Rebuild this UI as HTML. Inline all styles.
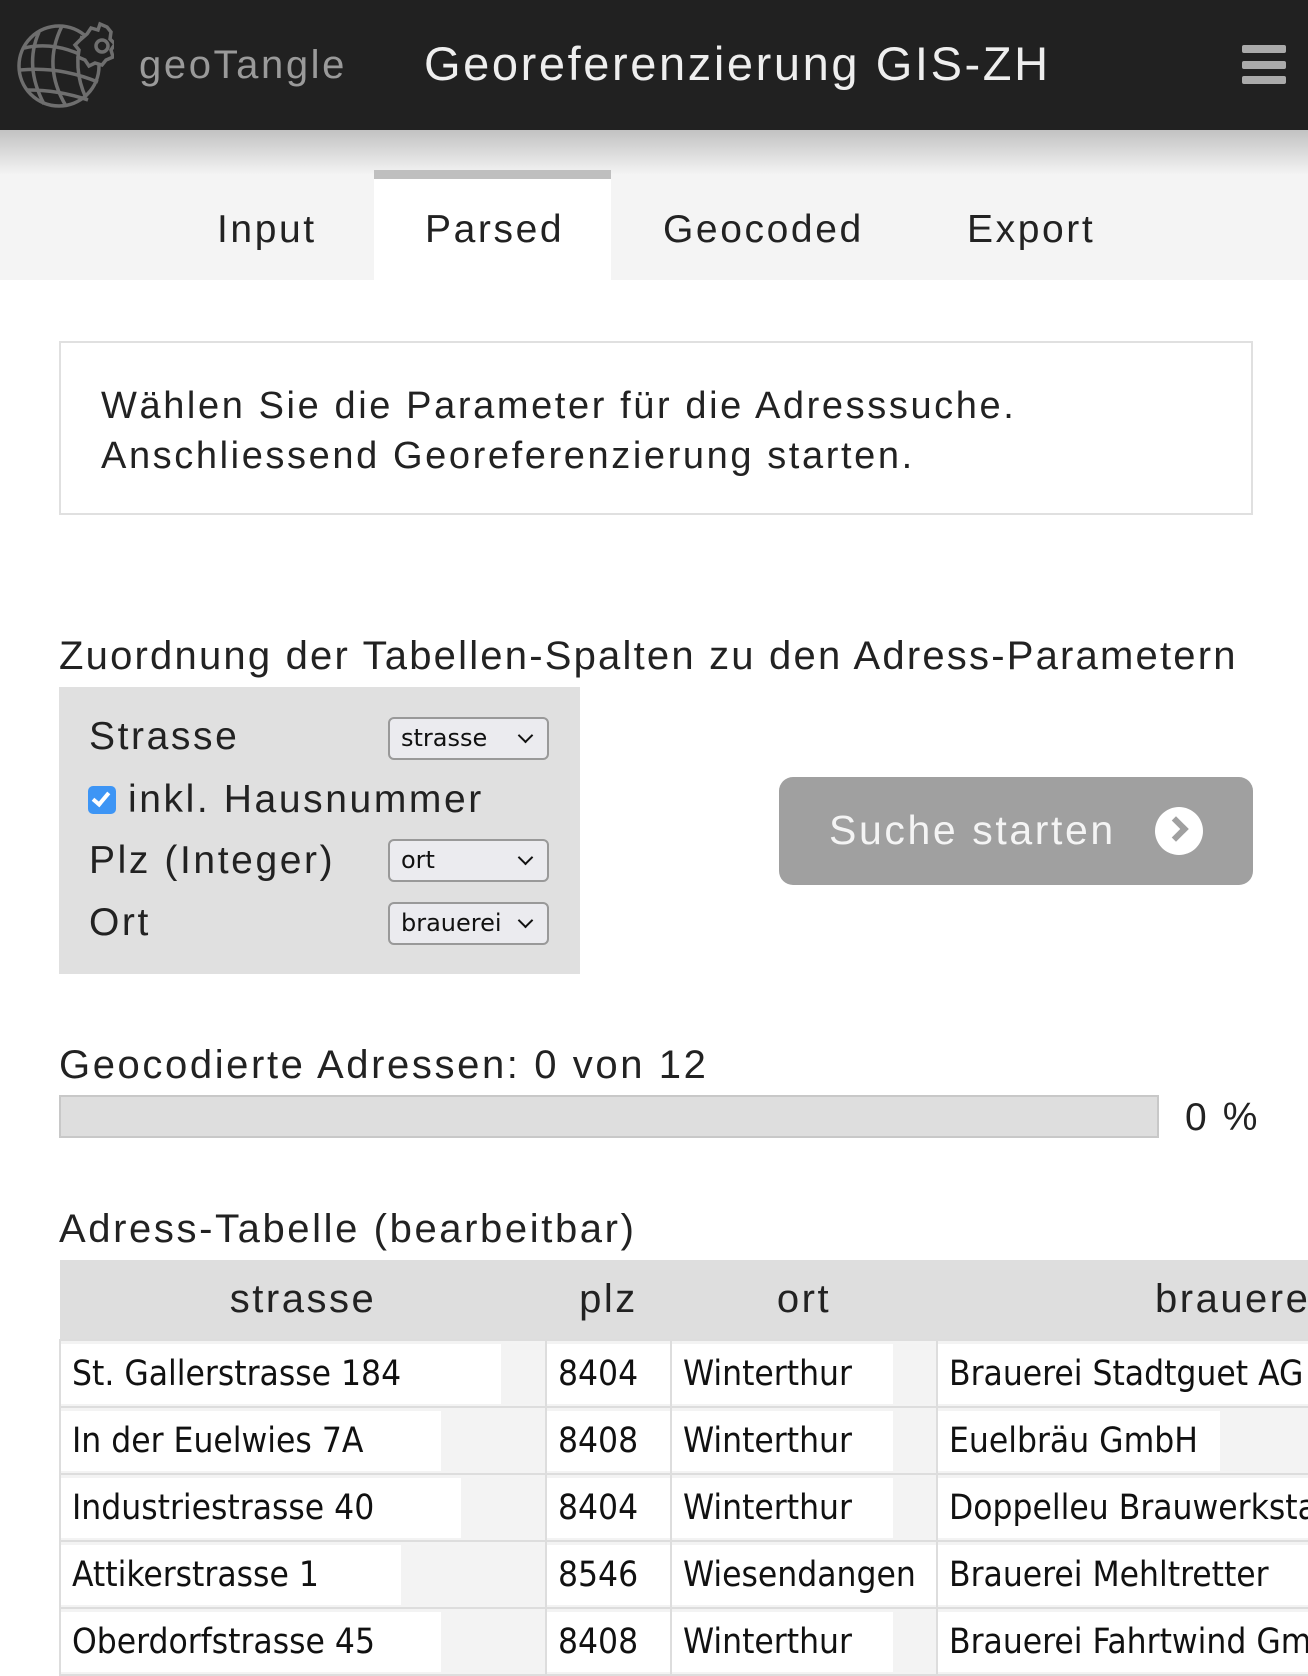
<!DOCTYPE html>
<html><head><meta charset="utf-8">
<style>
*{box-sizing:border-box;margin:0;padding:0}
body{width:1308px;height:1676px;overflow:hidden;background:#fff;font-family:"Liberation Sans",sans-serif;color:#222;position:relative}
.hdr{position:absolute;left:0;top:0;width:1308px;height:130px;background:#212121}
.abs{position:absolute;white-space:nowrap}
.ls{letter-spacing:2.6px}
.tabs{position:absolute;left:0;top:130px;width:1308px;height:150px;background:linear-gradient(#c2c2c2 0px,#f4f4f4 45px,#f4f4f4 100%)}
.tab{position:absolute;top:78px;font-size:39px;color:#222;letter-spacing:2.6px}
.sel{position:absolute;left:388px;width:161px;height:43px;border:2px solid #999;border-radius:6px;background:#ebebef;font-family:"DejaVu Sans",sans-serif;font-size:24px;padding:5px 0 0 11px;color:#111}
.sel:after{content:"";position:absolute;right:16px;top:11px;width:9px;height:9px;border-right:2.5px solid #111;border-bottom:2.5px solid #111;transform:rotate(45deg)}
table{position:absolute;left:59px;top:1260px;border-collapse:collapse;width:1400px}
th{height:80px;background:#dedede;font-weight:normal;font-size:40px;color:#222;letter-spacing:2.5px}
td{height:67px;border:2px solid #ddd;background:#f3f3f3;padding:2px 0;font-family:"DejaVu Sans Condensed","DejaVu Sans",sans-serif;font-size:35px;color:#111}
td span{display:block;background:#fff;height:60px;line-height:60px;padding-left:11px;white-space:nowrap;overflow:hidden}
</style></head><body>
<div class="hdr">
<svg class="abs" style="left:14px;top:18px" width="100" height="92" viewBox="0 0 100 92" fill="none" stroke="#6e6e6e" stroke-width="3.5">
<circle cx="45" cy="48" r="40"/>
<path d="M25 14 Q10 48 30 86 M48 8 Q28 48 52 88 M68 18 Q58 50 72 80"/>
<path d="M10 30 Q45 22 80 44 M6 52 Q45 48 84 64 M14 72 Q45 72 74 82"/>
<path fill="#212121" d="M73 16 l4 -6 l7 2 l2 -6 l7 3 l4 5 l-1 7 l5 5 l-4 6 l2 7 l-7 3 l-4 5 l-7 -2 l-6 3 l-4 -6 l-7 -3 l1 -7 l-4 -5 l5 -5 z"/>
<circle cx="88" cy="28" r="6"/>
</svg>
<div class="abs ls" style="left:139px;top:43px;font-size:40px;color:#9a9a9a">geoTangle</div>
<div class="abs ls" style="left:424px;top:36px;font-size:47px;color:#eee">Georeferenzierung GIS-ZH</div>
<div class="abs" style="left:1242px;top:45px;width:44px;height:8px;background:#aaa;border-radius:2px"></div>
<div class="abs" style="left:1242px;top:61px;width:44px;height:8px;background:#aaa;border-radius:2px"></div>
<div class="abs" style="left:1242px;top:76px;width:44px;height:8px;background:#aaa;border-radius:2px"></div>
</div>
<div class="tabs">
<div class="abs" style="left:374px;top:40px;width:237px;height:110px;background:#fff;border-top:9px solid #bfbfbf"></div>
<div class="tab" style="left:217px">Input</div>
<div class="tab" style="left:425px">Parsed</div>
<div class="tab" style="left:663px">Geocoded</div>
<div class="tab" style="left:967px">Export</div>
</div>
<div class="abs" style="left:59px;top:341px;width:1194px;height:174px;border:2px solid #e0e0e0"></div>
<div class="abs ls" style="left:101px;top:381px;font-size:38px;line-height:50px">Wählen Sie die Parameter für die Adresssuche.<br>Anschliessend Georeferenzierung starten.</div>
<div class="abs" style="left:59px;top:634px;font-size:40px;letter-spacing:2.2px">Zuordnung der Tabellen-Spalten zu den Adress-Parametern</div>
<div class="abs" style="left:59px;top:687px;width:521px;height:287px;background:#e0e0e0"></div>
<div class="abs ls" style="left:89px;top:715px;font-size:39px">Strasse</div>
<div class="sel" style="top:717px">strasse</div>
<div class="abs" style="left:88px;top:786px;width:28px;height:28px;background:#3d95f5;border-radius:5px"></div>
<div class="abs" style="left:96px;top:789px;width:10px;height:17px;border-right:4px solid #fff;border-bottom:4px solid #fff;transform:rotate(40deg)"></div>
<div class="abs ls" style="left:128px;top:778px;font-size:39px">inkl. Hausnummer</div>
<div class="abs ls" style="left:89px;top:839px;font-size:39px">Plz (Integer)</div>
<div class="sel" style="top:839px">ort</div>
<div class="abs ls" style="left:89px;top:901px;font-size:39px">Ort</div>
<div class="sel" style="top:902px">brauerei</div>
<div class="abs" style="left:779px;top:777px;width:474px;height:108px;background:#a0a0a0;border-radius:14px"></div>
<div class="abs ls" style="left:829px;top:807px;font-size:41px;color:#f4f4f4">Suche starten</div>
<div class="abs" style="left:1155px;top:807px;width:48px;height:48px;border-radius:50%;background:#fff"></div>
<div class="abs" style="left:1167px;top:820px;width:18px;height:18px;border-right:6px solid #a0a0a0;border-top:6px solid #a0a0a0;transform:rotate(45deg)"></div>
<div class="abs ls" style="left:59px;top:1043px;font-size:40px">Geocodierte Adressen: 0 von 12</div>
<div class="abs" style="left:59px;top:1095px;width:1100px;height:43px;background:#dedede;border:2px solid #c8c8c8"></div>
<div class="abs ls" style="left:1185px;top:1096px;font-size:39px">0 %</div>
<div class="abs ls" style="left:59px;top:1207px;font-size:40px">Adress-Tabelle (bearbeitbar)</div>
<table>
<tr><th style="width:486px">strasse</th><th style="width:125px">plz</th><th style="width:266px">ort</th><th style="text-align:left;padding-left:218px">brauerei</th></tr>
<tr><td><span style="width:440px">St. Gallerstrasse 184</span></td><td><span>8404</span></td><td><span style="width:221px">Winterthur</span></td><td><span>Brauerei Stadtguet AG</span></td></tr>
<tr><td><span style="width:380px">In der Euelwies 7A</span></td><td><span>8408</span></td><td><span style="width:221px">Winterthur</span></td><td><span style="width:282px">Euelbräu GmbH</span></td></tr>
<tr><td><span style="width:400px">Industriestrasse 40</span></td><td><span>8404</span></td><td><span style="width:221px">Winterthur</span></td><td><span>Doppelleu Brauwerkstatt</span></td></tr>
<tr><td><span style="width:340px">Attikerstrasse 1</span></td><td><span>8546</span></td><td><span>Wiesendangen</span></td><td><span>Brauerei Mehltretter</span></td></tr>
<tr><td><span style="width:380px">Oberdorfstrasse 45</span></td><td><span>8408</span></td><td><span style="width:221px">Winterthur</span></td><td><span>Brauerei Fahrtwind GmbH</span></td></tr>
</table>
</body></html>
